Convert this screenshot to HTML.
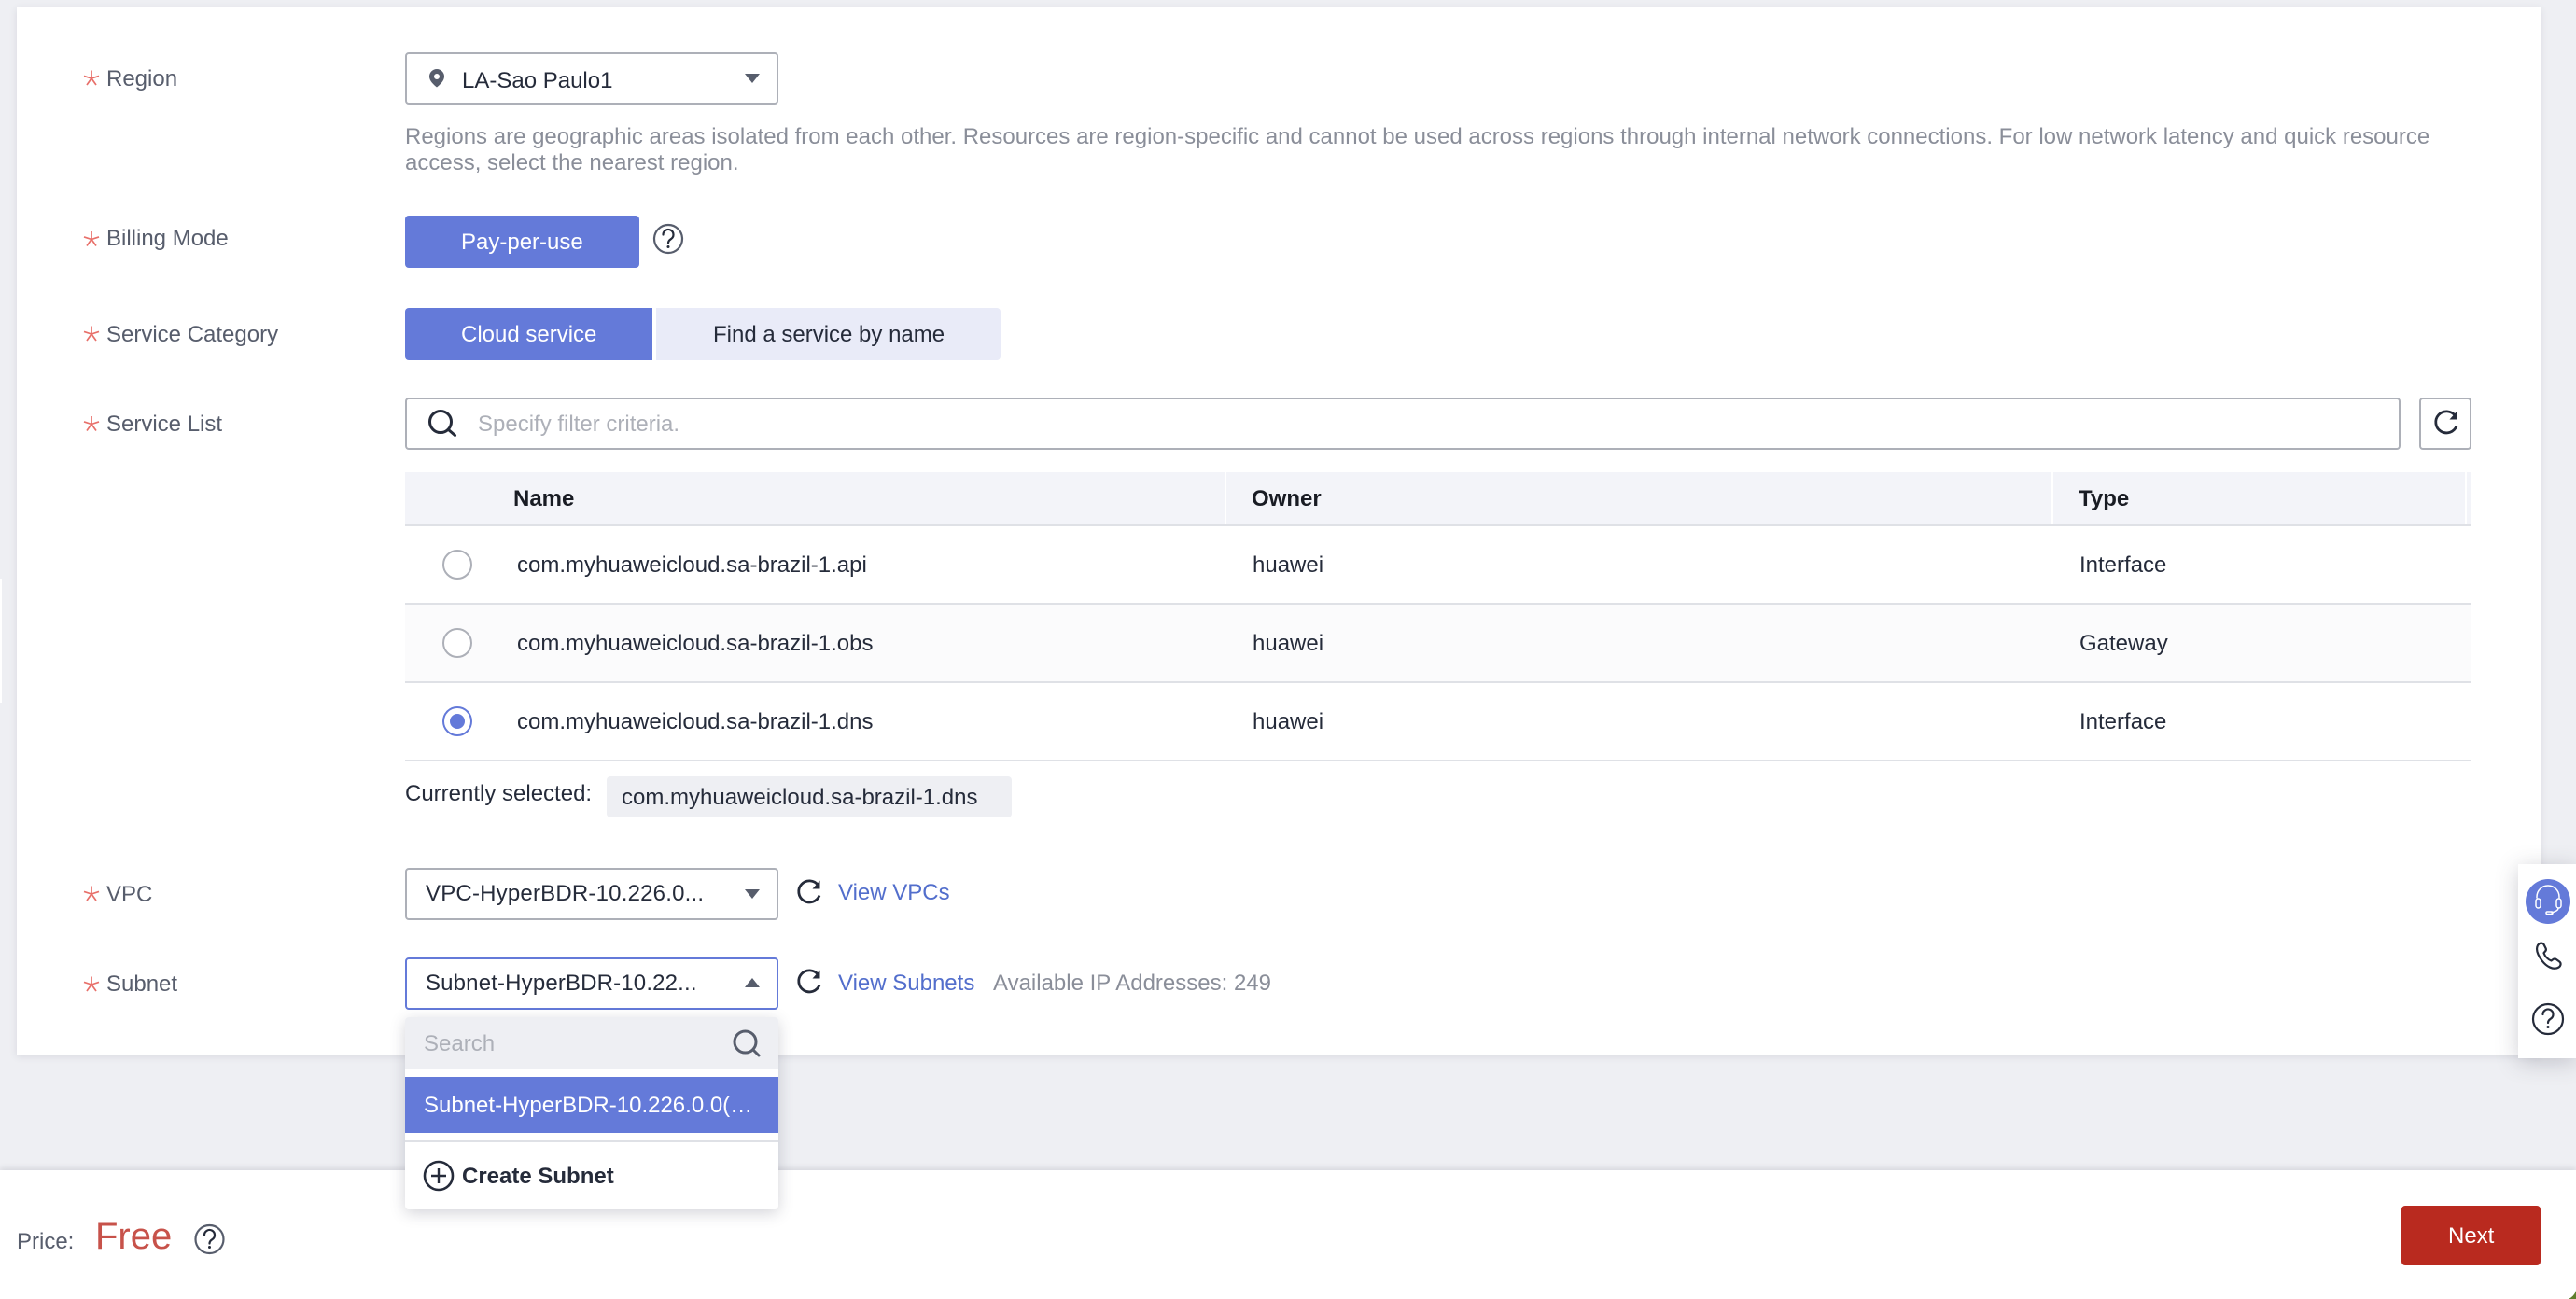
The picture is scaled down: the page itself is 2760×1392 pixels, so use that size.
<!DOCTYPE html>
<html lang="en"><head><meta charset="utf-8"><title>Create VPC Endpoint</title>
<style>
html,body{margin:0;padding:0}
body{position:relative;width:2760px;height:1392px;overflow:hidden;background:#eeeff3;font-family:"Liberation Sans",Arial,sans-serif;font-size:24px;color:#252b3a}
.a{position:absolute;box-sizing:border-box}
.t{position:absolute;white-space:nowrap;line-height:32px;height:32px}
.l{color:#575d6c}.h{color:#8a8e99}.b{font-weight:bold;color:#191c24}
.lnk{color:#526ecc}.w{color:#fff}
.box{position:absolute;box-sizing:border-box;background:#fff;border:2px solid #adb0b8;border-radius:4px}
.line{position:absolute;left:434px;width:2214px;height:2px;background:#dfe1e6}
.sep{position:absolute;top:506px;height:56px;width:2px;background:#fff}
.radio{position:absolute;box-sizing:border-box;left:474px;width:32px;height:32px;border-radius:50%;border:2px solid #adb0b8;background:#fff}
</style></head><body>
<div class="a" style="left:0;top:620px;width:2px;height:133px;background:#fff"></div>
<div class="a" style="left:18px;top:8px;width:2704px;height:1122px;background:#fff;box-shadow:0 2px 8px rgba(60,60,80,.12)"></div>

<span class="t l" style="left:114px;top:69px">Region</span>
<div class="box" style="left:434px;top:56px;width:400px;height:56px"></div>
<span class="t" style="left:495px;top:71px">LA-Sao Paulo1</span>
<span class="t h" style="left:434px;top:131px">Regions are geographic areas isolated from each other. Resources are region-specific and cannot be used across regions through internal network connections. For low network latency and quick resource</span>
<span class="t h" style="left:434px;top:159px">access, select the nearest region.</span>

<span class="t l" style="left:114px;top:240px">Billing Mode</span>
<div class="a" style="left:434px;top:231px;width:251px;height:56px;background:#647ad9;border-radius:4px"></div>
<span class="t w" style="left:494px;top:244px">Pay-per-use</span>

<span class="t l" style="left:114px;top:343px">Service Category</span>
<div class="a" style="left:434px;top:330px;width:265px;height:56px;background:#647ad9;border-radius:4px 0 0 4px"></div>
<span class="t w" style="left:494px;top:343px">Cloud service</span>
<div class="a" style="left:703px;top:330px;width:369px;height:56px;background:#e9ebf8;border-radius:0 4px 4px 0"></div>
<span class="t" style="left:764px;top:343px">Find a service by name</span>

<span class="t l" style="left:114px;top:439px">Service List</span>
<div class="box" style="left:434px;top:426px;width:2138px;height:56px"></div>
<span class="t" style="left:512px;top:439px;color:#adb0b8">Specify filter criteria.</span>
<div class="box" style="left:2592px;top:426px;width:56px;height:56px"></div>

<div class="a" style="left:434px;top:506px;width:2214px;height:56px;background:#f3f4f9"></div>
<div class="line" style="top:562px"></div>
<div class="sep" style="left:1312px"></div><div class="sep" style="left:2198px"></div><div class="sep" style="left:2641px"></div>
<span class="t b" style="left:550px;top:519px">Name</span>
<span class="t b" style="left:1341px;top:519px">Owner</span>
<span class="t b" style="left:2227px;top:519px">Type</span>

<div class="a" style="left:434px;top:648px;width:2214px;height:83px;background:#fbfbfc"></div>
<div class="line" style="top:646px"></div>
<div class="line" style="top:730px"></div>
<div class="line" style="top:814px"></div>
<div class="radio" style="top:589px"></div>
<div class="radio" style="top:673px"></div>
<div class="radio" style="top:757px;border-color:#647ad9"></div>
<div class="a" style="left:482px;top:765px;width:16px;height:16px;border-radius:50%;background:#647ad9"></div>
<span class="t" style="left:554px;top:590px">com.myhuaweicloud.sa-brazil-1.api</span>
<span class="t" style="left:1342px;top:590px">huawei</span>
<span class="t" style="left:2228px;top:590px">Interface</span>
<span class="t" style="left:554px;top:674px">com.myhuaweicloud.sa-brazil-1.obs</span>
<span class="t" style="left:1342px;top:674px">huawei</span>
<span class="t" style="left:2228px;top:674px">Gateway</span>
<span class="t" style="left:554px;top:758px">com.myhuaweicloud.sa-brazil-1.dns</span>
<span class="t" style="left:1342px;top:758px">huawei</span>
<span class="t" style="left:2228px;top:758px">Interface</span>

<span class="t" style="left:434px;top:835px">Currently selected:</span>
<div class="a" style="left:650px;top:832px;width:434px;height:44px;background:#eeeff3;border-radius:4px"></div>
<span class="t" style="left:666px;top:839px">com.myhuaweicloud.sa-brazil-1.dns</span>

<span class="t l" style="left:114px;top:943px">VPC</span>
<div class="box" style="left:434px;top:930px;width:400px;height:56px"></div>
<span class="t" style="left:456px;top:942px;letter-spacing:.2px">VPC-HyperBDR-10.226.0...</span>
<span class="t lnk" style="left:898px;top:941px">View VPCs</span>

<span class="t l" style="left:114px;top:1039px">Subnet</span>
<div class="box" style="left:434px;top:1026px;width:400px;height:56px;border-color:#647ad9"></div>
<span class="t" style="left:456px;top:1038px;letter-spacing:.16px">Subnet-HyperBDR-10.22...</span>
<span class="t lnk" style="left:898px;top:1038px">View Subnets</span>
<span class="t h" style="left:1064px;top:1038px">Available IP Addresses: 249</span>

<!-- footer -->
<div class="a" style="left:0;top:1254px;width:2760px;height:138px;background:#fff;box-shadow:0 -2px 6px rgba(60,60,80,.14)"></div>
<span class="t l" style="left:18px;top:1315px">Price:</span>
<span class="a" style="left:102px;top:1302px;font-size:40px;line-height:46px;color:#c7524a;white-space:nowrap">Free</span>
<div class="a" style="left:2573px;top:1292px;width:149px;height:64px;background:#b92a1f;border-radius:4px"></div>
<span class="t w" style="left:2623px;top:1309px">Next</span>

<!-- right widget -->
<div class="a" style="left:2698px;top:926px;width:62px;height:208px;background:#fff;box-shadow:0 4px 24px rgba(60,60,80,.25)"></div>

<!-- dropdown -->
<div class="a" style="left:434px;top:1090px;width:400px;height:206px;background:#fff;border-radius:4px;box-shadow:0 4px 16px rgba(60,60,80,.22)"></div>
<div class="a" style="left:434px;top:1090px;width:400px;height:56px;background:#eeeff3;border-radius:4px 4px 0 0"></div>
<span class="t" style="left:454px;top:1103px;color:#adb0b8">Search</span>
<div class="a" style="left:434px;top:1154px;width:400px;height:60px;background:#647ad9"></div>
<span class="t w" style="left:454px;top:1169px">Subnet-HyperBDR-10.226.0.0(…</span>
<div class="a" style="left:434px;top:1222px;width:400px;height:2px;background:#dfe1e6"></div>
<span class="t" style="left:495px;top:1245px;font-weight:bold">Create Subnet</span>

<svg class="a" style="left:0;top:0" width="2760" height="1392" viewBox="0 0 2760 1392" fill="none">
 <!-- stars -->
 <g stroke="#e8706a" stroke-width="1.700">
  <path d="M98 75.500V84M90 81.400L98 84M106 81.400L98 84M93 91L98 84M103 91L98 84"/>
  <path d="M98 248V256.500M90 253.900L98 256.500M106 253.900L98 256.500M93 263.500L98 256.500M103 263.500L98 256.500"/>
  <path d="M98 349.500V358M90 355.400L98 358M106 355.400L98 358M93 365L98 358M103 365L98 358"/>
  <path d="M98 446V454.500M90 451.900L98 454.500M106 451.900L98 454.500M93 461.500L98 454.500M103 461.500L98 454.500"/>
  <path d="M98 949.500V958M90 955.400L98 958M106 955.400L98 958M93 965L98 958M103 965L98 958"/>
  <path d="M98 1046.500V1055M90 1052.400L98 1055M106 1052.400L98 1055M93 1062L98 1055M103 1062L98 1055"/>
 </g>
 <!-- pin -->
 <path fill-rule="evenodd" d="M468 74a8 8 0 0 0-8 8c0 4.800 5 9 8 11.500 3-2.500 8-6.700 8-11.500a8 8 0 0 0-8-8zm0 5a3 3 0 1 1 0 6 3 3 0 0 1 0-6z" fill="#575d6c"/>
 <!-- carets -->
 <path d="M798 79h16l-8 10z" fill="#575d6c"/>
 <path d="M798 953h16l-8 10z" fill="#575d6c"/>
 <path d="M798 1058h16l-8-10z" fill="#575d6c"/>
 <!-- help icons -->
 <g stroke="#575d6c" stroke-width="2.200">
  <circle cx="716" cy="256" r="15"/>
  <circle cx="224.500" cy="1328" r="15"/>
 </g>
 <g id="q" stroke="#252b3a" stroke-width="2.200" stroke-linecap="round">
  <path d="M710.500 251.500a5.500 5.500 0 1 1 8.500 4.600c-2 1.300-3 2.300-3 4.400"/>
  <path d="M219 1323.500a5.500 5.500 0 1 1 8.500 4.600c-2 1.300-3 2.300-3 4.400"/>
 </g>
 <circle cx="716" cy="264.500" r="1.500" fill="#252b3a"/>
 <circle cx="224.500" cy="1336.500" r="1.500" fill="#252b3a"/>
 <!-- search -->
 <g stroke="#252b3a" stroke-width="3" stroke-linecap="round">
  <circle cx="472" cy="452" r="11.500"/><path d="M480.500 460.500l7 6"/>
 </g>
 <g stroke="#575d6c" stroke-width="3" stroke-linecap="round">
  <circle cx="798.500" cy="1116.500" r="11.500"/><path d="M807 1125l6 6"/>
 </g>
 <!-- refresh -->
 <g stroke="#252b3a" stroke-width="2.800" fill="none">
  <path d="M2630.500 445.500a11.500 11.500 0 1 0 1.500 11"/>
  <path d="M876.500 948.500a11.500 11.500 0 1 0 1.500 11"/>
  <path d="M876.500 1044.500a11.500 11.500 0 1 0 1.500 11"/>
 </g>
 <g fill="#252b3a">
  <path d="M2632.500 440.500v9h-8z"/>
  <path d="M878.500 943.500v9h-8z"/>
  <path d="M878.500 1039.500v9h-8z"/>
 </g>
 <!-- plus circle -->
 <circle cx="470" cy="1260" r="15" stroke="#252b3a" stroke-width="2.600"/>
 <path d="M462 1260h16M470 1252v16" stroke="#252b3a" stroke-width="2.400"/>
 <!-- headset -->
 <circle cx="2730" cy="966" r="24" fill="#647ad9"/>
 <g stroke="#fff" stroke-width="1.500" fill="none" stroke-linecap="round">
  <path d="M2718 962v-1a12 12 0 0 1 24 0v1"/>
  <rect x="2717" y="963" width="5" height="10" rx="2.500"/>
  <rect x="2739" y="963" width="5" height="10" rx="2.500"/>
  <path d="M2741 973c0 3-4 4-7 5"/>
  <rect x="2728" y="977" width="7" height="2.500" rx="1.200"/>
 </g>
 <!-- phone -->
 <g transform="translate(0 1.500)"><path d="M2719 1011.500c2-3 5-3 6.500-1l2 4c.8 1.600.4 2.800-1 4l-1 1.200c1.300 3.800 4.500 7 8 8.300l1.300-1c1.300-1 2.800-1.300 4-.5l3.500 2.500c2 1.600 1.500 4.500-.7 6-6 3.500-13.500-1-18-7s-7-12-4.600-16.500z" stroke="#252b3a" stroke-width="2.200" stroke-linejoin="round"/></g>
 <!-- help -->
 <circle cx="2730" cy="1092" r="16" stroke="#252b3a" stroke-width="2.200"/>
 <path d="M2724.500 1087a5.500 5.500 0 1 1 8.500 4.600c-2 1.300-3 2.300-3 4.400" stroke="#252b3a" stroke-width="2.200" stroke-linecap="round"/>
 <circle cx="2730" cy="1100.500" r="1.500" fill="#252b3a"/>
 <!-- window corner -->
 <path d="M2752 1392q6-3 8-9v9z" fill="#5e7d2c"/>
</svg>
</body></html>
